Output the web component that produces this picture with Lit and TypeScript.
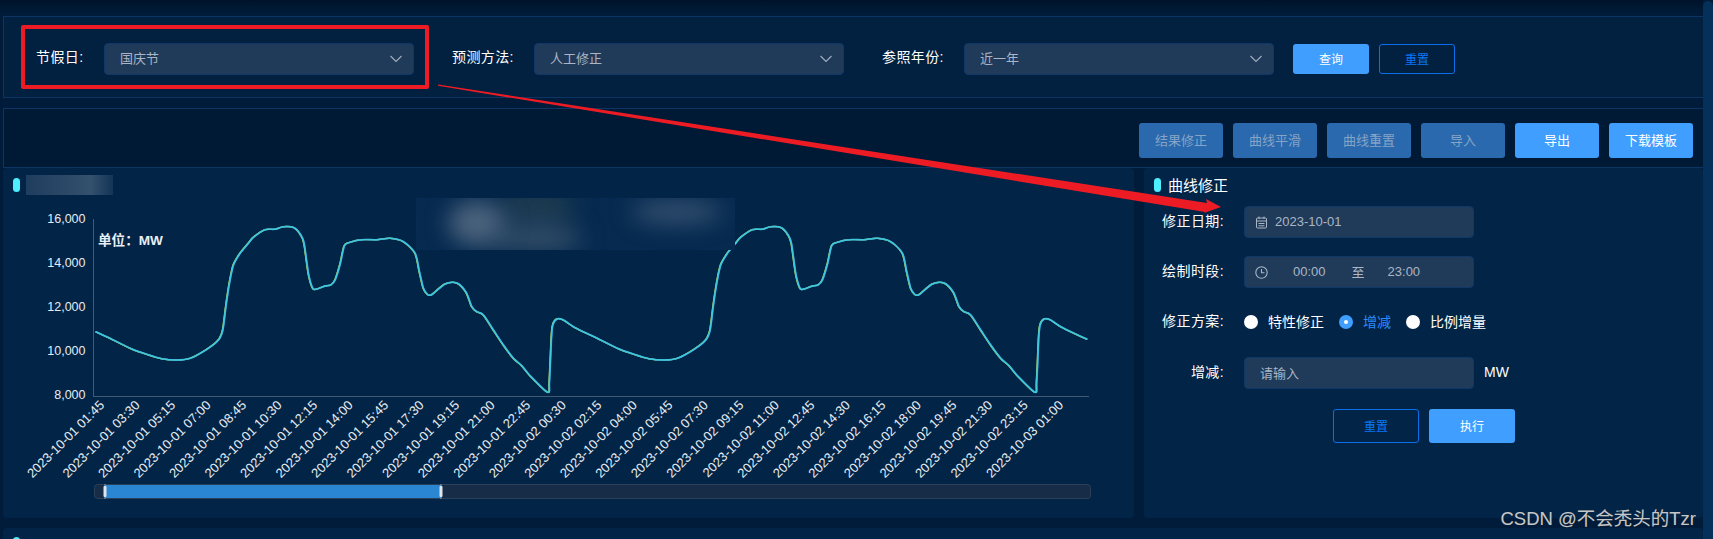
import { LitElement, html, css, svg } from "lit";
import { customElement } from "lit/decorators.js";

const z6: [number, number][] = [[17,380],[60,400],[125,432],[170,448],[215,461],[260,465],[300,460],[350,433],[385,405],[398,375],[408,300],[418,235],[430,180],[450,145],[475,115],[490,97],[525,74],[555,73],[580,65],[612,68],[632,90],[642,115],[655,205],[668,250],[680,252],[705,243],[722,240],[735,225]];
const z7: [number, number][] = [[0,178],[13,122],[30,112],[65,104],[110,104],[150,100],[190,110],[225,145],[238,200],[250,250],[262,268],[275,269],[315,237],[350,234],[378,262],[395,305],[410,320],[430,330],[460,375],[490,420],[520,460],[545,482],[570,512],[623,562],[628,530],[634,400],[638,360],[650,342],[668,344],[700,365],[740,385],[780,403]];
const day: [number, number][] = [
  ...z6.map(([x, y]) => [90 + x / 3, 205 + y / 3] as [number, number]),
  ...z7.map(([x, y]) => [340 + x / 3, 205 + y / 3] as [number, number]),
];
const PERIOD = 487.3;
const cut = day.filter((p) => p[0] < 580);
const points: [number, number][] = [...cut, ...day.map(([x, y]) => [x + PERIOD, y] as [number, number])];

function smooth(p: [number, number][]): string {
  let d = `M${p[0][0].toFixed(1)} ${p[0][1].toFixed(1)}`;
  for (let i = 0; i < p.length - 1; i++) {
    const a = p[Math.max(i - 1, 0)], b = p[i], c = p[i + 1], e = p[Math.min(i + 2, p.length - 1)];
    const t = 0.14;
    const c1x = b[0] + (c[0] - a[0]) * t, c1y = b[1] + (c[1] - a[1]) * t;
    const c2x = c[0] - (e[0] - b[0]) * t, c2y = c[1] - (e[1] - b[1]) * t;
    d += `C${c1x.toFixed(1)} ${c1y.toFixed(1)} ${c2x.toFixed(1)} ${c2y.toFixed(1)} ${c[0].toFixed(1)} ${c[1].toFixed(1)}`;
  }
  return d;
}
const linePath = smooth(points);

const xLabels = [
  "2023-10-01 01:45","2023-10-01 03:30","2023-10-01 05:15","2023-10-01 07:00","2023-10-01 08:45","2023-10-01 10:30","2023-10-01 12:15","2023-10-01 14:00","2023-10-01 15:45","2023-10-01 17:30","2023-10-01 19:15","2023-10-01 21:00","2023-10-01 22:45","2023-10-02 00:30","2023-10-02 02:15","2023-10-02 04:00","2023-10-02 05:45","2023-10-02 07:30","2023-10-02 09:15","2023-10-02 11:00","2023-10-02 12:45","2023-10-02 14:30","2023-10-02 16:15","2023-10-02 18:00","2023-10-02 19:45","2023-10-02 21:30","2023-10-02 23:15","2023-10-03 01:00",
];
const yLabels: [string, number][] = [["16,000", 218.5], ["14,000", 262.5], ["12,000", 306.5], ["10,000", 350.5], ["8,000", 394.5]];

const chevron = html`<svg class="chev" width="14" height="8" viewBox="0 0 14 8"><polyline points="1.5,1 7,6.5 12.5,1" fill="none" stroke="#a3afbe" stroke-width="1.1"/></svg>`;

@customElement("app-root")
export class AppRoot extends LitElement {
  static styles = css`
    :host { display: block; width: 100%; height: 539px; overflow: hidden; position: relative;
      font-family: "Liberation Sans", "Noto Sans CJK SC", sans-serif; color: #fff; }
    * { box-sizing: border-box; }
    .app { display: flex; height: 539px; background: #011c3a; }
    .main { flex: 1; min-width: 0; display: flex; flex-direction: column; padding: 16px 0 0 3px;
      background: linear-gradient(#00122a 0, #001a36 10px, #011c3a 16px); }
    .rail { width: 10px; background: #05305a; border-radius: 5px 5px 0 0; margin-top: 1px; }
    .search { height: 82px; flex: none; display: flex; align-items: flex-start; padding: 26px 0 0 32px; gap: 38px;
      background: #02203f; border: 1px solid #0c3564; border-right: 0; }
    .item { display: flex; align-items: center; gap: 20px; }
    .lab { font-size: 14px; letter-spacing: .4px; white-space: nowrap; line-height: 26px; padding-bottom: 4px; }
    .w48 { width: 48px; } .w62 { width: 62px; }
    .select { width: 310px; height: 32px; background: #203a59; border: 1px solid #0f3767; border-radius: 4px;
      display: flex; align-items: center; justify-content: space-between; padding: 0 10px 0 15px; font-size: 13px; color: #aab6c5; }
    .seltxt { padding-bottom: 3px; }
    .btns { display: flex; gap: 10px; margin-left: -19px; padding-top: 1px; }
    .btn { height: 30px; width: 76px; display: flex; align-items: center; justify-content: center; font-size: 12px; border-radius: 3px; padding-bottom: 2px; }
    .primary { background: #409eff; color: #fff; }
    .outline { border: 1px solid #0a6fe8; color: #0a78f5; }
    .toolbar { height: 60px; flex: none; margin-top: 10px; display: flex; justify-content: flex-end; gap: 10px; padding: 14px 10px 0 0;
      background: #001a35; border: 1px solid #0c3564; border-right: 0; }
    .tbtn { width: 84px; height: 35px; font-size: 13px; border-radius: 3px; display: flex; align-items: center; justify-content: center; padding-bottom: 3px; }
    .dis { background: #2a69ae; color: #86a4c6; }
    .row { display: flex; gap: 10px; height: 350px; flex: none; }
    .card { background: #022447; border-radius: 4px; position: relative; overflow: hidden; }
    .chartcard { width: 1131px; flex: none; }
    .side { flex: 1; min-width: 0; }
    .head { display: flex; align-items: center; gap: 7px; height: 34px; padding-left: 10px; font-size: 15px; }
    .headtxt { padding-bottom: 2px; }
    .mark { width: 7px; height: 14px; border-radius: 4px; background: #4deeff; flex: none; }
    .blurtitle { width: 87px; height: 20px; margin-left: -1px;
      background: linear-gradient(90deg, #1f3d5e, #2f4c6a 60%, #33506d 75%, #143557); }
    .chart { display: block; width: 1131px; height: 316px; }
    .chart text { font-family: "Liberation Sans", "Noto Sans CJK SC", sans-serif; }
    .blur { position: absolute; left: 413px; top: 30px; width: 319px; height: 52px; overflow: hidden; background: #062a50; }
    .blob { position: absolute; border-radius: 50%; filter: blur(11px); }
    .b1 { left: 32px; top: 2px; width: 58px; height: 46px; background: #4a627c; }
    .b2 { left: 82px; top: -12px; width: 78px; height: 40px; background: #1c3b50; }
    .b3 { left: 72px; top: 24px; width: 95px; height: 32px; background: #2e4a65; }
    .b4 { left: 215px; top: 2px; width: 92px; height: 24px; background: #34506f; }
    .form { padding-top: 4px; display: flex; flex-direction: column; gap: 18px; }
    .frow { display: flex; align-items: center; height: 32px; gap: 20px; }
    .flab { width: 80px; text-align: right; font-size: 14px; letter-spacing: .4px; white-space: nowrap; padding-bottom: 4px; }
    .input { width: 230px; height: 32px; background: #203a59; border: 1px solid #0f3767; border-radius: 4px;
      display: flex; align-items: center; font-size: 13px; color: #a9b6c6; padding-left: 10px; }
    .input span { padding-bottom: 2px; }
    .input .txt { margin-left: 7px; }
    .ph { padding-left: 15px; }
    .t1 { margin-left: 25px; } .t2 { margin-left: 26px; } .t3 { margin-left: 23px; }
    .unit { font-size: 14px; margin-left: -10px; padding-bottom: 2px; }
    .radios { display: flex; align-items: center; font-size: 14px; }
    .radio { width: 14px; height: 14px; border-radius: 50%; background: #fff; margin-right: 10px; flex: none;
      display: flex; align-items: center; justify-content: center; }
    .on { background: #409eff; }
    .on::after { content: ""; width: 4px; height: 4px; border-radius: 50%; background: #fff; }
    .rlab { margin-right: 15px; padding-bottom: 2px; }
    .active { color: #2b8bff; }
    .gap1 { margin-top: 1px; }
    .actions { display: flex; gap: 10px; padding-left: 189px; margin-top: 2px; }
    .abtn { width: 86px; height: 34px; font-size: 12px; border-radius: 3px; display: flex; align-items: center; justify-content: center; padding-bottom: 2px; }
    .bottom { flex: 1; margin-top: 10px; border-radius: 4px 4px 0 0; padding: 9px 0 0 10px; min-height: 0; }
    .bottom .mark { height: 10px; }
    .annot { position: absolute; left: 0; top: 0; pointer-events: none; }
    .redbox { position: absolute; left: 21px; top: 25px; width: 408px; height: 64px; border: 4px solid #ed1c24; border-radius: 2px; }
    .wm { position: absolute; right: 17px; top: 507px; font-size: 18.5px; line-height: 24px; color: #c3c7cb; white-space: nowrap; text-shadow: 0 0 1px #333; }
  `;

  private chart() {
    return svg`
      <line x1="93.5" y1="219" x2="93.5" y2="396" stroke="#3f5b78"/>
      <line x1="93" y1="396.5" x2="1089" y2="396.5" stroke="#3f5b78"/>
      ${yLabels.map(([t, y]) => svg`<text x="85.5" y=${y} dy="4.5" text-anchor="end" font-size="12.5" fill="#e6ecf2">${t}</text>`)}
      <text x="98" y="245" font-size="13.6" font-weight="700" fill="#e8eef4">单位：MW</text>
      ${xLabels.map((t, i) => svg`<text transform="translate(${105 + i * 35.52} 406) rotate(-45)" text-anchor="end" font-size="13" fill="#e6ecf2">${t}</text>`)}
      <path d=${linePath} transform="translate(-0.3 0)" fill="none" stroke="#d9d92a" stroke-width="1.4"/>
      <path d=${linePath} transform="translate(0.4 0)" fill="none" stroke="#1b8fe0" stroke-width="1.4"/>
      <path d=${linePath} fill="none" stroke="#3fc8dc" stroke-width="1.6"/>
      <rect x="94.5" y="484.5" width="996" height="14" rx="3" fill="#172c46" stroke="#2b4159"/>
      <rect x="105" y="485" width="336" height="13" fill="#2a85d3"/>
      <line x1="105" y1="484" x2="105" y2="499" stroke="#8fa8c4"/>
      <line x1="441" y1="484" x2="441" y2="499" stroke="#8fa8c4"/>
      <rect x="103.5" y="486" width="3" height="11" rx="1" fill="#dfe6ef"/>
      <rect x="439.5" y="486" width="3" height="11" rx="1" fill="#dfe6ef"/>
    `;
  }

  render() {
    const stroke = "#a9b6c6";
    return html`
      <div class="app">
        <div class="main">
          <div class="search">
            <div class="item"><span class="lab w48">节假日:</span><div class="select"><span class="seltxt">国庆节</span>${chevron}</div></div>
            <div class="item"><span class="lab w62">预测方法:</span><div class="select"><span class="seltxt">人工修正</span>${chevron}</div></div>
            <div class="item"><span class="lab w62">参照年份:</span><div class="select"><span class="seltxt">近一年</span>${chevron}</div></div>
            <div class="btns"><div class="btn primary">查询</div><div class="btn outline">重置</div></div>
          </div>
          <div class="toolbar">
            <div class="tbtn dis">结果修正</div><div class="tbtn dis">曲线平滑</div><div class="tbtn dis">曲线重置</div><div class="tbtn dis">导入</div>
            <div class="tbtn primary">导出</div><div class="tbtn primary">下载模板</div>
          </div>
          <div class="row">
            <div class="card chartcard">
              <div class="head"><span class="mark"></span><span class="blurtitle"></span></div>
              <svg class="chart" viewBox="3 202 1131 316">${this.chart()}</svg>
              <div class="blur"><i class="blob b2"></i><i class="blob b3"></i><i class="blob b1"></i><i class="blob b4"></i></div>
            </div>
            <div class="card side">
              <div class="head"><span class="mark"></span><span class="headtxt">曲线修正</span></div>
              <div class="form">
                <div class="frow"><span class="flab">修正日期:</span>
                  <div class="input">
                    <svg width="13" height="13" viewBox="0 0 13 13" fill="none" stroke=${stroke}><rect x="1.5" y="2" width="10" height="10" rx="1"/><path d="M1.5 5h10M4 .5v2.5M9 .5v2.5M3.5 7.5h6M3.5 9.8h6"/></svg>
                    <span class="txt">2023-10-01</span>
                  </div>
                </div>
                <div class="frow"><span class="flab">绘制时段:</span>
                  <div class="input">
                    <svg width="13" height="13" viewBox="0 0 13 13" fill="none" stroke=${stroke} stroke-width="1.1"><circle cx="6.5" cy="6.5" r="5.7"/><path d="M6.5 3v3.7h3"/></svg>
                    <span class="t1">00:00</span><span class="t2">至</span><span class="t3">23:00</span>
                  </div>
                </div>
                <div class="frow"><span class="flab">修正方案:</span>
                  <div class="radios">
                    <span class="radio"></span><span class="rlab">特性修正</span>
                    <span class="radio on"></span><span class="rlab active">增减</span>
                    <span class="radio"></span><span class="rlab">比例增量</span>
                  </div>
                </div>
                <div class="frow gap1"><span class="flab">增减:</span>
                  <div class="input ph"><span>请输入</span></div><span class="unit">MW</span>
                </div>
                <div class="actions">
                  <div class="abtn outline">重置</div><div class="abtn primary">执行</div>
                </div>
              </div>
            </div>
          </div>
          <div class="card bottom"><div class="mark"></div></div>
        </div>
        <div class="rail"></div>
      </div>
      <div class="redbox"></div>
      <svg class="annot" width="1713" height="539" viewBox="0 0 1713 539">
        <polygon points="438,84.5 1207,203 1206,199 1221,207 1204,213 1205,212 438,85.8" fill="#ed1c24"/>
      </svg>
      <div class="wm">CSDN @不会秃头的Tzr</div>
    `;
  }
}
